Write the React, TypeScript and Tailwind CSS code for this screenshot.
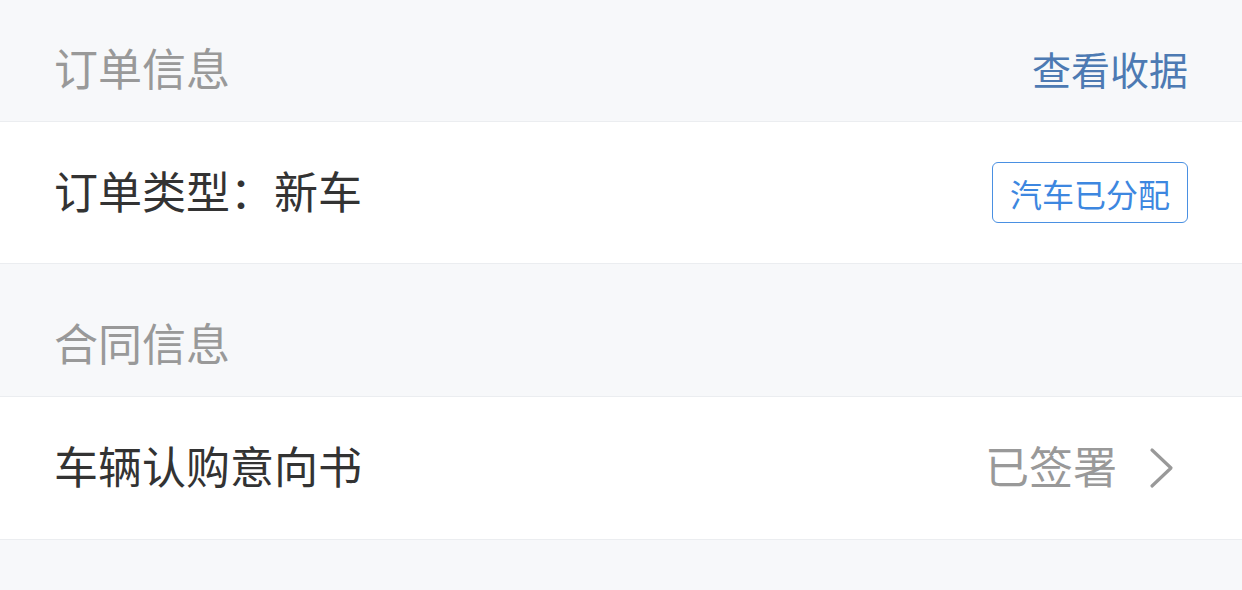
const font = { fontFamily: '"Noto Sans CJK SC", "Noto Sans", sans-serif' };

function SectionHeader({ title, action }: { title: string; action?: string }) {
  return (
    <div className="flex items-end justify-between px-[54px] pb-[32px] border-b border-[#ebedf0]">
      <span className="text-[44px] leading-none text-[#999999]">{title}</span>
      {action && <span className="text-[39px] leading-none text-[#4d7ab3] pb-[1px]">{action}</span>}
    </div>
  );
}

function Chevron() {
  return (
    <svg width="26" height="42" viewBox="0 0 26 42" fill="none" className="text-[#999999]">
      <path d="M3 3 L22 21 L3 39" stroke="currentColor" strokeWidth="3.2" strokeLinecap="round" strokeLinejoin="round" />
    </svg>
  );
}

export default function App() {
  return (
    <div className="min-h-[590px] bg-[#f7f8fa]" style={font}>
      <div className="h-[122px] flex flex-col justify-end">
        <SectionHeader title="订单信息" action="查看收据" />
      </div>

      <div className="h-[142px] bg-white border-b border-[#ebedf0] flex items-center justify-between pl-[54px] pr-[54px]">
        <span className="text-[44px] leading-none text-[#333333] pb-[6px]">订单类型：新车</span>
        <span className="h-[61px] px-[17px] flex items-center rounded-[6px] border-[1.5px] border-[#4a90e2] text-[32px] leading-none text-[#3d87e0]">
          汽车已分配
        </span>
      </div>

      <div className="h-[133px] flex flex-col justify-end">
        <SectionHeader title="合同信息" />
      </div>

      <div className="h-[143px] bg-white border-b border-[#ebedf0] flex items-center justify-between pl-[54px] pr-[67px]">
        <span className="text-[44px] leading-none text-[#333333] pb-[6px]">车辆认购意向书</span>
        <div className="flex items-center gap-[32px]">
          <span className="text-[44px] leading-none text-[#999999] pb-[6px]">已签署</span>
          <Chevron />
        </div>
      </div>
    </div>
  );
}
